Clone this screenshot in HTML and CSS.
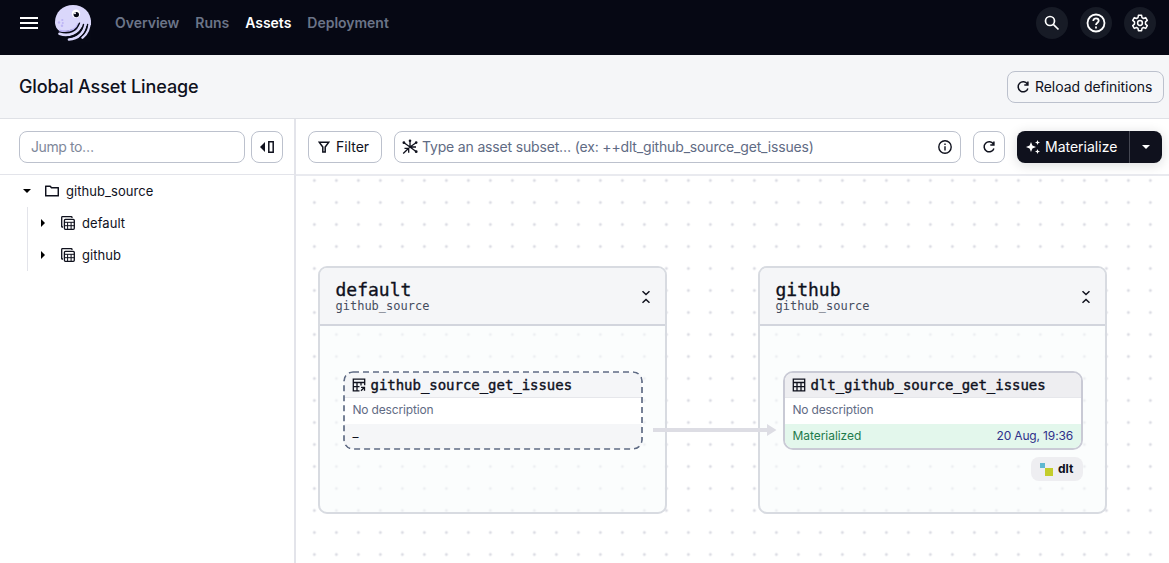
FILE: index.html
```html
<!DOCTYPE html>
<html lang="en">
<head>
<meta charset="utf-8">
<title>Global Asset Lineage</title>
<link rel="stylesheet" href="styles.css">
</head>
<body>
<svg width="0" height="0" class="defs">
  <defs>
    <symbol id="refresh" viewBox="0 0 16 16"><path d="M12.400 5.200A5 5 0 1 0 12.900 9.400M12.900 2.400v3.600H9.300" fill="none" stroke="currentColor" stroke-width="1.500"/></symbol>
    <symbol id="table" viewBox="0 0 14 14"><path d="M1.300 1.200h11.400v11.600H1.300zM1.300 4.500h11.400M1.300 8.700h11.400M5 4.500v8.300M9 4.500v8.300" fill="none" stroke="currentColor" stroke-width="1.300"/></symbol>
    <symbol id="group" viewBox="0 0 14 14"><path d="M11 2V1.400Q11 .7 10.300.7H1.400Q.7.700.7 1.400v9Q.7 11 1.400 11H2" fill="none" stroke="currentColor" stroke-width="1.300"/><rect x="3.400" y="3.400" width="9.900" height="9.900" rx="1" fill="none" stroke="currentColor" stroke-width="1.300"/><path d="M3.300 6.300h10.100M3.300 9.700h10.100M6.600 6.200v7.200M10.100 6.200v7.200" fill="none" stroke="currentColor"/></symbol>
    <symbol id="collapse" viewBox="0 0 10 14"><path d="M1.500 1.200L5 4.500l3.500-3.300M1.500 12.800L5 9.500l3.500 3.300" fill="none" stroke="currentColor" stroke-width="1.500"/></symbol>
  </defs>
</svg>
<header class="topbar">
  <svg class="menu" width="18" height="12" viewBox="0 0 18 12"><path d="M0 1h18M0 6h18M0 11h18" stroke="#fff" stroke-width="2"/></svg>
  <svg class="logo" width="38" height="38" viewBox="0 0 38 38">
    <path d="M1 18C1 8 9 1 19 1s18 7 18 17c0 4 0 6-2 9L24 30 6 27C3 26 1 22 1 18z" fill="#dad7fb"/>
    <path d="M24 24l13-3v17H8l-4-9z" fill="#070915"/>
    <path d="M5 26.500c9 2.500 17 0 19.500-7" fill="none" stroke="#bdb5f5" stroke-width="2.200"/>
    <path d="M5 28.200c11 2 18-2 20.500-9" fill="none" stroke="#070915" stroke-width="1.500" stroke-linecap="round"/>
    <g fill="none" stroke-linecap="round"><path d="M5.500 29.800C15 33 24.500 29 27.500 20M15 35.500C24 35 30.500 29 31.500 19M28.500 33.500C33 30 35.500 25 35.600 17" stroke="#dad7fb" stroke-width="2.700"/><path d="M13 33.200C22 33 28 27.500 29.500 20.500M26 33.500C31 30 33 26 33.600 20.500" stroke="#070915" stroke-width="1.400"/></g>
    <circle cx="22" cy="9.800" r="4.200" fill="#fff"/><circle cx="22.300" cy="10.600" r="2.700" fill="#070915"/><circle cx="21" cy="9.300" r="1" fill="#fff"/>
    <g fill="#bdb5f5"><circle cx="5" cy="18.500" r="1.200"/><circle cx="8.300" cy="16" r="1.100"/><circle cx="8.800" cy="19" r="1"/><circle cx="8" cy="21.800" r="1.200"/></g>
  </svg>
  <nav class="nav"><a>Overview</a><a>Runs</a><a class="active">Assets</a><a>Deployment</a></nav>
  <div class="tools">
    <span class="round"><svg width="16" height="16" viewBox="0 0 16 16" fill="none" stroke="#fff" stroke-width="1.700"><circle cx="6" cy="6" r="4.500"/><path d="M9.300 9.300l5.200 5.200"/></svg></span>
    <span class="round"><svg width="20" height="20" viewBox="0 0 20 20" fill="none" stroke="#fff" stroke-width="1.800"><circle cx="10" cy="10" r="8.500"/><path d="M7.300 8c0-3.700 5.400-3.400 5.400-.2C12.700 9.700 10 9.800 10 12"/><path d="M10 13.400v2"/></svg></span>
    <span class="round"><svg width="18" height="18" viewBox="0 0 18 18" fill="none" stroke="#fff" stroke-width="1.500" stroke-linejoin="round"><path d="M7.400 1.300h3.200l.4 2.300 1.500.9 2.200-.9 1.600 2.800-1.800 1.500v2.200l1.800 1.500-1.600 2.800-2.200-.9-1.500.9-.4 2.300H7.400L7 14.400l-1.500-.9-2.200.9-1.600-2.800 1.800-1.500V7.900L1.700 6.400l1.600-2.800 2.200.9L7 3.600z"/><circle cx="9" cy="9" r="2.400"/></svg></span>
  </div>
</header>
<section class="titlebar">
  <h1>Global Asset Lineage</h1>
  <button class="btn reload"><svg width="16" height="16"><use href="#refresh"/></svg><span>Reload definitions</span></button>
</section>
<main class="main">
  <aside class="side">
    <div class="jump-row">
      <div class="field jump"><span>Jump to…</span></div>
      <button class="btn square"><svg width="14" height="12" viewBox="0 0 14 12"><path d="M5 1v10L0 6z" fill="#0f111d"/><path d="M8.800.8h4.400v10.400H8.800z" fill="none" stroke="#0f111d" stroke-width="1.500"/></svg></button>
    </div>
    <div class="tree">
      <div class="row root"><svg width="8" height="4"><path d="M0 0h8L4 4z"/></svg><svg class="folder" width="14" height="12" viewBox="0 0 14 12"><path d="M.7 10.800V1.200h4.500l1.300 1.500h6.800v8.100z" fill="none" stroke="#0f111d" stroke-width="1.500" stroke-linejoin="round"/></svg><span>github_source</span></div>
      <div class="kids">
        <div class="row"><svg width="4" height="8"><path d="M0 0v8l4-4z"/></svg><svg class="grp" width="14" height="14"><use href="#group"/></svg><span>default</span></div>
        <div class="row"><svg width="4" height="8"><path d="M0 0v8l4-4z"/></svg><svg class="grp" width="14" height="14"><use href="#group"/></svg><span>github</span></div>
      </div>
    </div>
  </aside>
  <section class="content">
    <div class="toolbar">
      <button class="btn filter"><svg width="12" height="12" viewBox="0 0 12 12"><path d="M1.200 1.200h9.600L7.200 6v5H4.800V6z" fill="none" stroke="#0f111d" stroke-width="1.500"/></svg><span>Filter</span></button>
      <div class="field query">
        <svg width="16" height="16" viewBox="0 0 16 16" fill="none" stroke="#0f111d" stroke-width="1.300"><path d="M8 8V2M8 8L2 3.800M8 8l6-4.200M8 8h6M8 8l6 4.500M8 8l-6.800 6.500M2.500 9.300h4.200v4.400"/><g fill="#0f111d" stroke="none"><circle cx="8" cy="1.700" r="1.300"/><circle cx="1.900" cy="3.700" r="1.400"/><circle cx="14.200" cy="3.600" r="1.300"/><circle cx="14.200" cy="12.700" r="1.400"/></g></svg>
        <span>Type an asset subset… (ex: ++dlt_github_source_get_issues)</span>
        <svg class="info" width="14" height="14" viewBox="0 0 14 14" fill="none" stroke="#0f111d" stroke-width="1.400"><circle cx="7" cy="7" r="6.200"/><path d="M7 6.200v4.200M7 3.500v1.500"/></svg>
      </div>
      <button class="btn square"><svg width="16" height="16"><use href="#refresh"/></svg></button>
      <div class="primary"><span class="mat"><svg width="14" height="14" viewBox="0 0 14 14" fill="#fff"><path d="M5 2l1.400 3.600L10 7 6.400 8.400 5 12 3.600 8.400 0 7l3.600-1.400zM11.500 0l.7 1.800L14 2.500l-1.800.7-.7 1.800-.7-1.800L9 2.500l1.800-.7zM11.500 9l.7 1.800 1.800.7-1.800.7-.7 1.800-.7-1.800-1.800-.7 1.800-.7z"/></svg><span>Materialize</span></span><span class="drop"><svg width="8" height="4"><path d="M0 0h8L4 4z" fill="#fff"/></svg></span></div>
    </div>
    <div class="canvas">
      <div class="group left">
        <div class="ghead"><div><div class="gname">default</div><div class="gloc">github_source</div></div><svg width="10" height="14"><use href="#collapse"/></svg></div>
      </div>
      <div class="group right">
        <div class="ghead"><div><div class="gname">github</div><div class="gloc">github_source</div></div><svg width="10" height="14"><use href="#collapse"/></svg></div>
      </div>
      <svg class="edge" width="124" height="14" viewBox="0 0 124 14"><path d="M0 5h114V1l9.500 6-9.500 6V9H0z" fill="#dddde4"/></svg>
      <div class="node source">
        <div class="nhead"><svg width="14" height="14" viewBox="0 0 14 14"><path d="M7.500 12.800H1.300V1.200h11.400v6M1.300 4.500h11.400M1.300 8.700h6.200M5 4.500v8.300M9 4.500v3M9 9.300h3.500v3.500M12.500 9.300L9 12.800" fill="none" stroke="#0f111d" stroke-width="1.300"/></svg><span>github_source_get_issues</span></div>
        <div class="desc"><span>No description</span></div><div class="status none">–</div>
        <svg class="dash" width="300" height="79"><rect x="1" y="1" width="298" height="77" rx="9" fill="none" stroke="#5f6b84" stroke-width="1.700" stroke-dasharray="6 4"/></svg>
      </div>
      <div class="node asset">
        <div class="nhead"><svg width="14" height="14"><use href="#table"/></svg><span>dlt_github_source_get_issues</span></div>
        <div class="desc"><span>No description</span></div><div class="status ok"><span>Materialized</span><span class="when">20 Aug, 19:36</span></div>
      </div>
      <div class="tag"><svg width="13" height="13"><path d="M0 0h5v5H0z" fill="#5fb8d0"/><path d="M5 5h8v8H5z" fill="#c3cd2b"/></svg><b>dlt</b></div>
    </div>
  </section>
</main>
</body>
</html>
```
FILE: styles.css
```css
* { box-sizing: border-box; }
body { margin: 0; width: 1169px; height: 563px; overflow: hidden; background: #fff; color: #0f111d; font: 14px/20px Inter, sans-serif; display: flex; flex-direction: column; }
svg { display: block; flex: none; }
.defs { position: absolute; }
span { white-space: nowrap; }
.topbar { height: 55px; flex: none; background: #060814; display: flex; align-items: center; padding: 0 13px 9px 20px; }
.logo { margin-left: 16px; }
.nav { display: flex; gap: 16px; margin-left: 23px; color: #6b7488; font-weight: 600; letter-spacing: -.02px; }
.nav .active { color: #fff; }
.tools { margin-left: auto; display: flex; gap: 12px; }
.round { width: 32px; height: 32px; border-radius: 50%; background: #171b26; display: flex; align-items: center; justify-content: center; }
.titlebar { height: 64px; flex: none; background: #f5f6f8; border-bottom: 1px solid #dfe1e6; display: flex; align-items: center; justify-content: space-between; padding: 0 5px 0 19px; }
h1 { margin: 0; font-size: 18px; line-height: 24px; font-weight: 500; letter-spacing: -.1px; }
.btn { height: 32px; border: 1px solid #bcc1cd; border-radius: 8px; background: transparent; color: #0f111d; font: 14px/20px Inter, sans-serif; padding: 0; display: flex; align-items: center; flex: none; }
.reload { width: 157px; padding-left: 7px; gap: 4px; letter-spacing: -.05px; }
.main { display: flex; flex: 1; min-height: 0; }
.side { width: 296px; flex: none; border-right: 2px solid #e3e4ea; }
.jump-row { height: 56px; display: flex; align-items: center; gap: 6px; padding-left: 19px; border-bottom: 1px solid #e3e4ea; }
.field { height: 32px; border: 1px solid #bcc1cd; border-radius: 8px; display: flex; align-items: center; }
.jump { width: 226px; padding-left: 11px; color: #7e889a; letter-spacing: -.4px; }
.square { width: 32px; justify-content: center; }
.tree { font-size: 13px; letter-spacing: .05px; }
.row { height: 32px; display: flex; align-items: center; }
.row span { padding-bottom: 1px; }
.root { padding-left: 23px; }
.folder { margin: 0 7px 0 14px; }
.kids { margin-left: 27px; border-left: 1px solid #e3e4ea; }
.kids .row { padding-left: 13px; }
.grp { margin: 0 7px 0 16px; }
.content { flex: 1; min-width: 0; display: flex; flex-direction: column; }
.toolbar { height: 57px; flex: none; display: flex; align-items: center; padding: 1px 7px 0 12px; border-bottom: 2px solid #e9eaef; }
.filter { width: 74px; padding-left: 9px; gap: 6px; }
.query { width: 567px; margin: 0 12px; padding: 0 8px 0 7px; color: #5f6b84; gap: 4px; letter-spacing: -.17px; }
.info { margin-left: auto; }
.primary { margin-left: 12px; width: 145px; height: 32px; border-radius: 8px; background: #0f111d; color: #fff; display: flex; box-shadow: 0 2px 12px rgba(15,17,29,.15); }
.mat { width: 113px; border-right: 1px solid #454752; display: flex; align-items: center; padding-left: 9px; gap: 5px; }
.drop { flex: 1; display: flex; align-items: center; justify-content: center; }
.canvas { position: relative; flex: 1; overflow: hidden; background: radial-gradient(circle at 11px 11px, #dcdde4 1px, transparent 1.900px) 7.400px -6.500px / 22px 22px; }
.group { position: absolute; top: 90px; width: 349px; height: 248px; border: 2px solid #d8dbe1; border-radius: 9px; background: rgba(249,252,251,.6); overflow: hidden; }
.left { left: 22px; }
.right { left: 462px; }
.ghead { height: 58px; background: #f5f6f8; border-bottom: 2px solid #d2d5dd; display: flex; align-items: center; justify-content: space-between; padding: 2px 14.500px 0 15.500px; }
.gname, .gloc, .nhead { font-family: "DejaVu Sans Mono", monospace; }
.gname { font-size: 18px; line-height: 18px; -webkit-text-stroke: .35px; }
.gloc { font-size: 12px; line-height: 14px; color: #464d5e; }
.edge { position: absolute; left: 356.500px; top: 247px; }
.node { position: absolute; top: 195px; width: 300px; height: 79px; border-radius: 10px; overflow: hidden; font-size: 12px; background: #fff; border: 2px solid #c9cad5; }
.source { left: 47px; border: 0; padding: 1px; }
.asset { left: 487px; }
.dash { position: absolute; left: 0; top: 0; }
.nhead { height: 25px; display: flex; align-items: center; gap: 5px; padding: 0 0 1px 6.500px; font-size: 14px; background: #eeeef1; border-bottom: 1px solid #e6e7eb; -webkit-text-stroke: .4px; letter-spacing: -.03px; }
.source .nhead { height: 26px; padding: 1px 0 0 7.500px; background: #f5f6f8; }
.desc { height: 26px; padding: 2px 7.500px; color: #5f6b84; letter-spacing: -.17px; }
.source .desc { padding: 2px 8.500px; }
.status { height: 24px; display: flex; align-items: center; justify-content: space-between; padding: 0 8px 0 7.500px; }
.none { height: 25px; padding-left: 8.500px; background: #f5f6f8; }
.ok { background: #e3f7ec; color: #1f7a4d; letter-spacing: -.05px; }
.when { color: #30308a; letter-spacing: -.15px; }
.tag { position: absolute; left: 735px; top: 281px; width: 52px; height: 24px; border-radius: 8px; background: #eeeef1; display: flex; align-items: center; gap: 5px; padding-left: 9px; font-size: 12px; }
```
